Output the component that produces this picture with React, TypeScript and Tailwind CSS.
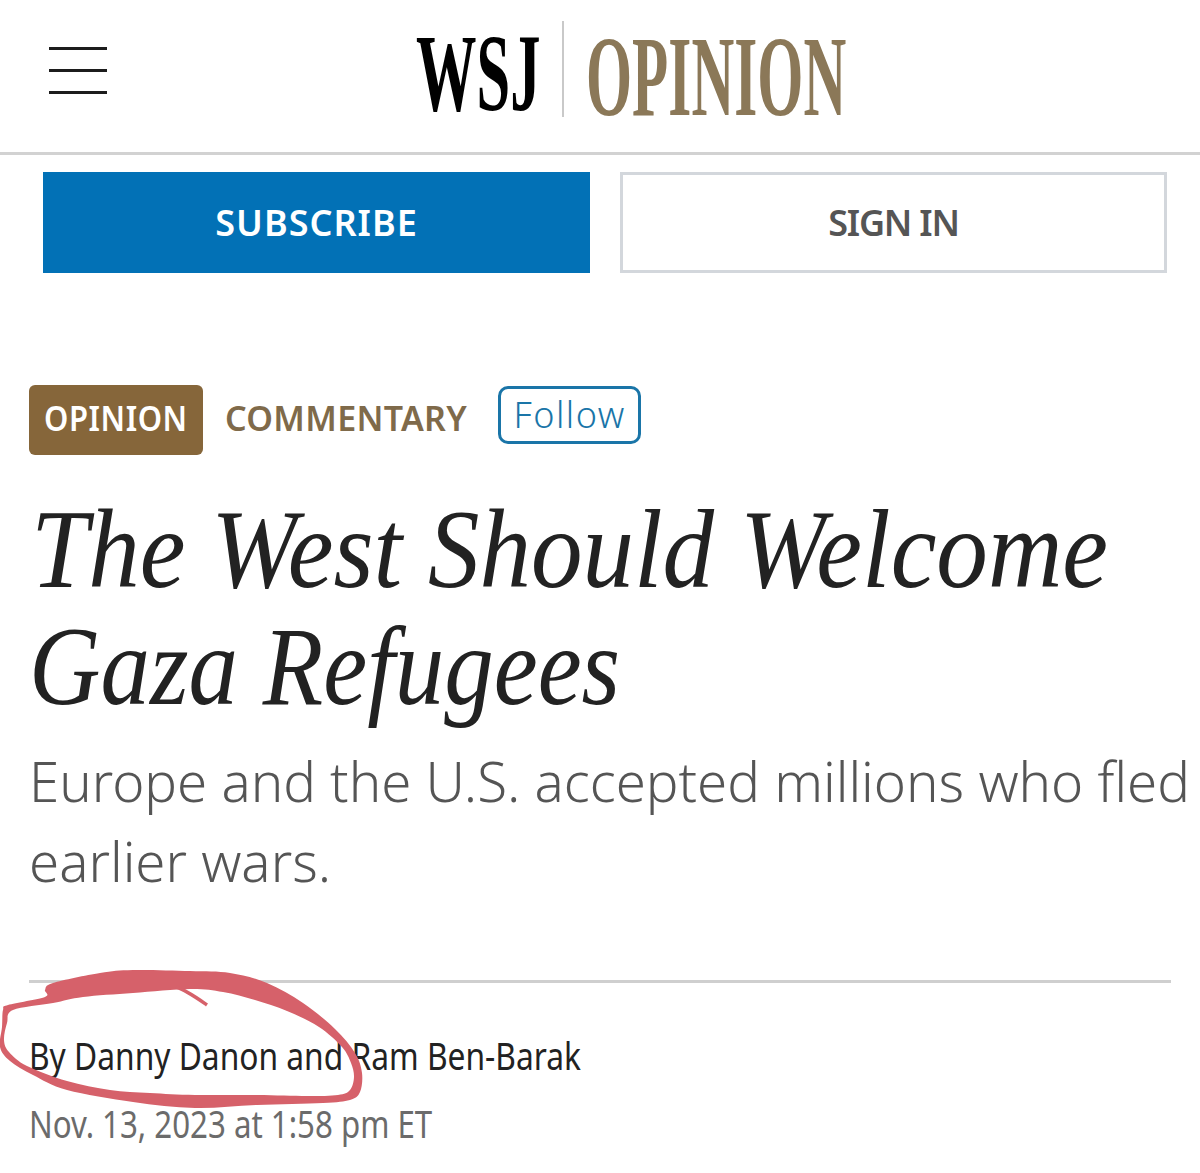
const ringOuter: [number, number][] = [
  [3, 1010], [8, 1005], [45, 997], [45, 990], [53, 983], [100, 973], [133, 970], [190, 971],
  [230, 973], [267, 983], [303, 1003], [335, 1029], [355, 1053], [362, 1073], [360, 1092],
  [350, 1100], [323, 1103], [257, 1105], [195, 1108], [133, 1102], [67, 1090], [33, 1075],
  [10, 1061], [0, 1047], [2, 1027],
];

const ringInner: [number, number][] = [
  [53, 1003], [13, 1010], [7, 1023], [4, 1040], [9, 1052], [27, 1066], [67, 1081], [110, 1090],
  [150, 1093], [195, 1095], [257, 1095], [307, 1096], [338, 1095], [350, 1090], [354, 1077],
  [351, 1063], [342, 1047], [319, 1027], [287, 1011], [255, 1000], [223, 992], [190, 989],
  [133, 993], [83, 997],
];

// closed catmull-rom curve through the hand-traced points
function smoothPath(pts: [number, number][]) {
  const n = pts.length;
  let d = `M${pts[0][0]} ${pts[0][1]}`;
  for (let i = 0; i < n; i++) {
    const p0 = pts[(i - 1 + n) % n];
    const p1 = pts[i];
    const p2 = pts[(i + 1) % n];
    const p3 = pts[(i + 2) % n];
    const c1x = p1[0] + (p2[0] - p0[0]) / 6;
    const c1y = p1[1] + (p2[1] - p0[1]) / 6;
    const c2x = p2[0] - (p3[0] - p1[0]) / 6;
    const c2y = p2[1] - (p3[1] - p1[1]) / 6;
    d += ` C${c1x} ${c1y} ${c2x} ${c2y} ${p2[0]} ${p2[1]}`;
  }
  return d + " Z";
}

export default function App() {
  return (
    <div className="relative h-[1173px] w-[1200px] overflow-hidden bg-white font-['Noto_Sans',sans-serif]">
      <header className="relative h-[155px] border-b-[3px] border-[#d2d2d2]">
        <div className="absolute left-[49px] top-[47px] flex h-[47px] w-[58px] flex-col justify-between">
          <span className="h-[3px] bg-[#1c1c1c]" />
          <span className="h-[3px] bg-[#1c1c1c]" />
          <span className="h-[3px] bg-[#1c1c1c]" />
        </div>
        <div className="flex h-full pl-[416px]">
          <div className="mt-[10px] h-[110px] w-[130px]">
            <span className="inline-block origin-left scale-x-[0.55] whitespace-nowrap font-['Liberation_Serif',serif] text-[110px] font-bold leading-[126px] text-black">WSJ</span>
          </div>
          <div className="ml-[16px] mt-[21px] h-[96px] w-[2px] bg-[#c9c9c9]" />
          <div className="ml-[22px] mt-[14px] h-[110px]">
            <span className="inline-block origin-left scale-x-[0.52] whitespace-nowrap font-['Liberation_Serif',serif] text-[114px] font-bold leading-[126px] text-[#8b7858]">OPINION</span>
          </div>
        </div>
      </header>

      <div className="mt-[17px] flex gap-[30px] pl-[43px]">
        <button type="button" className="h-[101px] w-[547px] bg-[#0271b6] text-[36px] font-semibold tracking-[1px] text-white">SUBSCRIBE</button>
        <button type="button" className="h-[101px] w-[547px] border-[3px] border-[#d3d7dc] bg-white text-[36px] font-semibold tracking-[-1.2px] text-[#555]">SIGN IN</button>
      </div>

      <div className="px-[29px]">
        <div className="mt-[112px] flex items-start">
          <span className="flex h-[70px] w-[174px] items-center justify-center rounded-[6px] bg-[#86663a] pb-[4px] text-[34px] font-semibold tracking-[0.6px] text-white">
            <span className="inline-block scale-x-[0.91]">OPINION</span>
          </span>
          <span className="ml-[22px] mt-[8px] text-[34px] font-semibold tracking-[0.3px] text-[#7f6a4a]">COMMENTARY</span>
          <span className="ml-[31px] mt-[1px] flex h-[58px] w-[143px] items-center justify-center rounded-[10px] border-[3px] border-[#1a75a8] text-[36px] font-light tracking-[1.5px] text-[#1a75a8]">Follow</span>
        </div>

        <h1 className="mt-[36px] font-['Liberation_Serif',serif] text-[112px] italic leading-[117px] text-[#222]">
          <span className="ml-[2px] block origin-left scale-x-[0.92] whitespace-nowrap">The West Should Welcome</span>
          <span className="block origin-left scale-x-[0.884] whitespace-nowrap">Gaza Refugees</span>
        </h1>

        <p className="mt-[16px] whitespace-nowrap text-[54.6px] font-light leading-[80px] text-[#555]">
          Europe and the U.S. accepted millions who fled
          <br />
          earlier wars.
        </p>

        <div className="mt-[79px] h-[3px] bg-[#cfcfcf]" />

        <div className="mt-[49px] origin-left scale-x-[0.835] whitespace-nowrap text-[38px] leading-[46px] text-[#222]">By Danny Danon and Ram Ben-Barak</div>
        <div className="mt-[22px] origin-left scale-x-[0.822] whitespace-nowrap text-[38px] leading-[46px] text-[#6b6b6b]">Nov. 13, 2023 at 1:58 pm ET</div>
      </div>

      <svg className="absolute inset-0" width="1200" height="1173" viewBox="0 0 1200 1173" fill="none">
        <path fill="#d6616a" fillRule="evenodd" d={`${smoothPath(ringOuter)} ${smoothPath(ringInner)}`} />
        <path d="M176 987 C186 990 197 998 207 1005" stroke="#d6616a" strokeWidth="3.5" />
      </svg>
    </div>
  );
}
